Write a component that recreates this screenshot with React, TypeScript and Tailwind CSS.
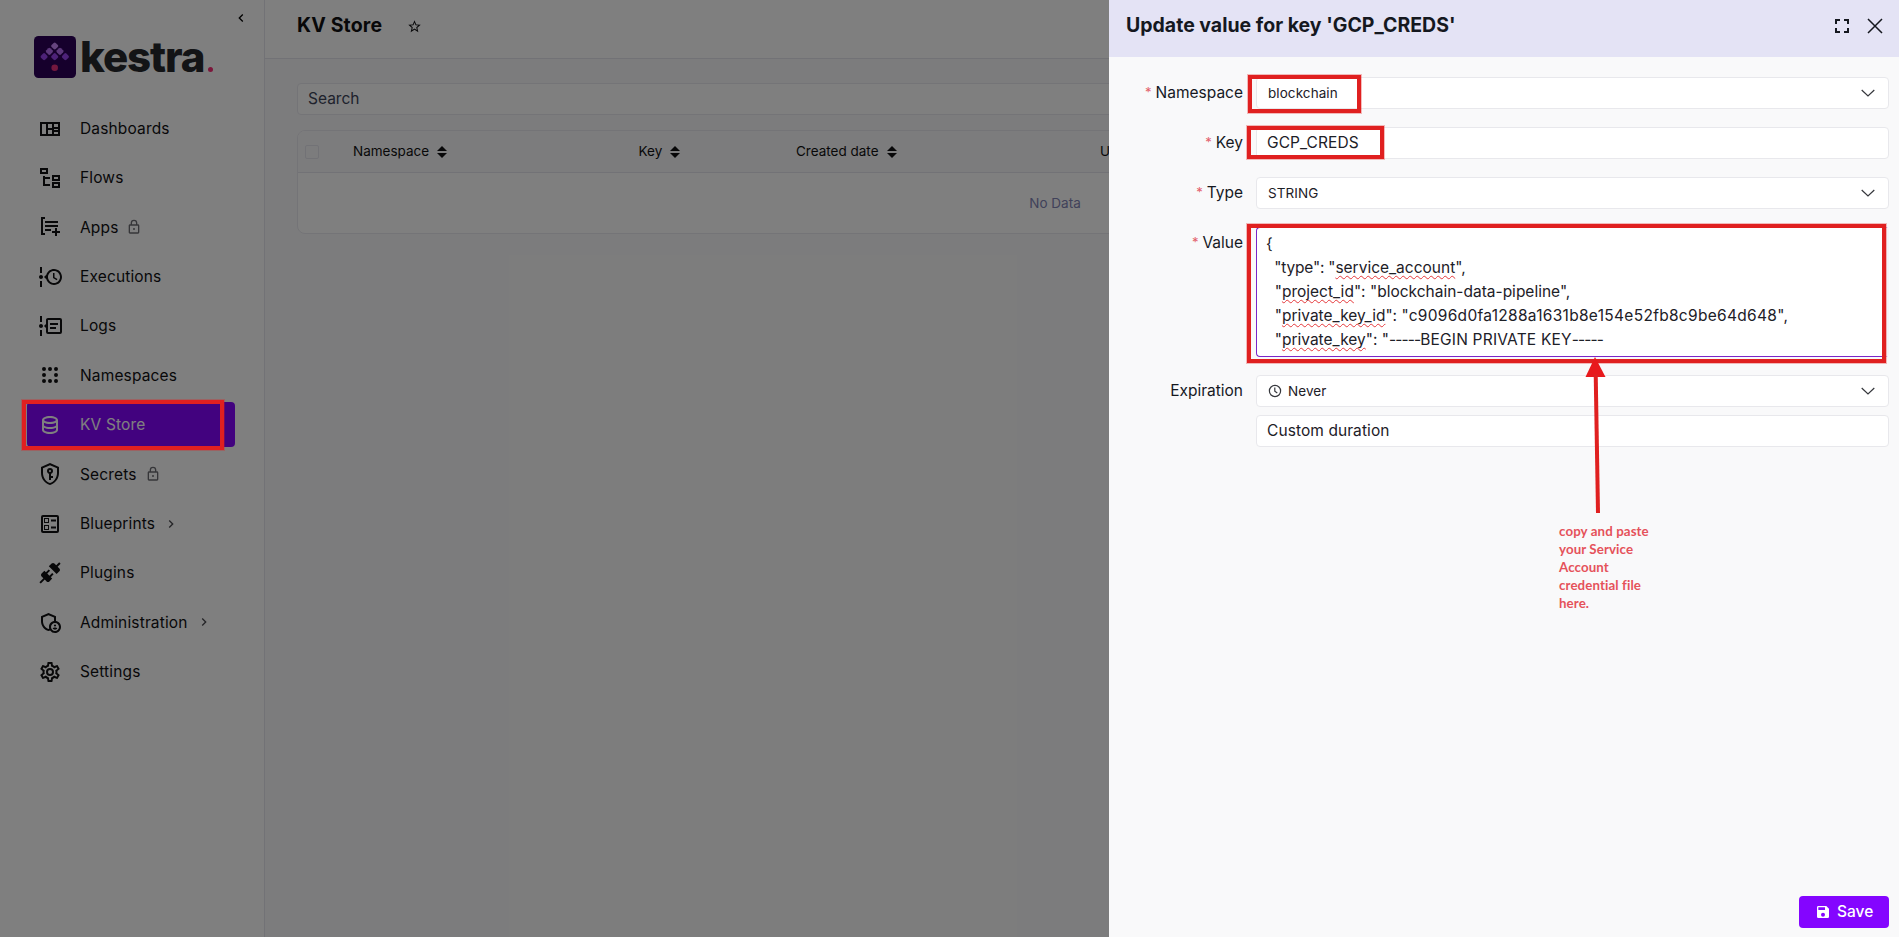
import React from "react";
import { MdOutlineAdminPanelSettings } from "react-icons/md";

const ICONS = {
  dashboard:
    "M2 5H22V19H2V5M4 7V17H8V7H4M10 7V11H14V7H10M10 13V17H14V13H10M16 7V10H20V7H16M16 12V13H20V12H16M16 15V17H20V15H16Z",
  flows:
    "M12,13H7v5h5v2H5V10h2v1h5v2M8,4V6H4V4H8m2-2H2v6h8V2m10,9v2H16V11h4m2-2H14v6h8V9m-2,9v2H16V18h4m2-2H14v6h8V16Z",
  apps: "M5 4V18H7V20H3V2H7V4H5M20 6H7V8H20V6M20 10H7V12H20V10M13 14H7V16H13V14M17 13H19V16H22V18H19V21H17V18H14V16H17V13Z",
  executions:
    "M4 2V8H2V2H4M2 22V16H4V22H2M5 12C5 13.11 4.11 14 3 14C1.9 14 1 13.11 1 12C1 10.9 1.9 10 3 10C4.11 10 5 10.9 5 12M24 12C24 16.42 20.42 20 16 20C12.4 20 9.36 17.62 8.35 14.35L6 12L8.35 9.65C9.36 6.38 12.4 4 16 4C20.42 4 24 7.58 24 12M22 12C22 8.69 19.31 6 16 6C12.69 6 10 8.69 10 12C10 15.31 12.69 18 16 18C19.31 18 22 15.31 22 12M16.5 8H15V13L18.7 15.2L19.5 14L16.5 12.2V8Z",
  logs: "M4 2V8H2V2H4M2 22V16H4V22H2M5 12C5 13.11 4.11 14 3 14C1.9 14 1 13.11 1 12C1 10.9 1.9 10 3 10C4.11 10 5 10.9 5 12M22 4H10C8.9 4 8 4.9 8 6V10L6 12L8 14V18A2 2 0 0 0 10 20H22A2 2 0 0 0 24 18V6A2 2 0 0 0 22 4M22 18H10V6H22V18M20 11H12V9H20V11M18 15H12V13H18V15Z",
  namespaces:
    "M4 6a2 2 0 1 0 4 0a2 2 0 1 0-4 0M10 6a2 2 0 1 0 4 0a2 2 0 1 0-4 0M16 6a2 2 0 1 0 4 0a2 2 0 1 0-4 0M4 12a2 2 0 1 0 4 0a2 2 0 1 0-4 0M16 12a2 2 0 1 0 4 0a2 2 0 1 0-4 0M4 18a2 2 0 1 0 4 0a2 2 0 1 0-4 0M10 18a2 2 0 1 0 4 0a2 2 0 1 0-4 0M16 18a2 2 0 1 0 4 0a2 2 0 1 0-4 0Z",
  database:
    "M12 3C7.58 3 4 4.79 4 7V17C4 19.21 7.59 21 12 21S20 19.21 20 17V7C20 4.79 16.42 3 12 3M18 17C18 17.5 15.87 19 12 19S6 17.5 6 17V14.77C7.61 15.55 9.72 16 12 16S16.39 15.55 18 14.77V17M18 12.45C16.7 13.4 14.42 14 12 14C9.58 14 7.3 13.4 6 12.45V9.64C7.47 10.47 9.61 11 12 11C14.39 11 16.53 10.47 18 9.64V12.45M12 9C8.13 9 6 7.5 6 7S8.13 5 12 5C15.87 5 18 6.5 18 7S15.87 9 12 9Z",
  secrets:
    "M21,11C21,16.55 17.16,21.74 12,23C6.84,21.74 3,16.55 3,11V5L12,1L21,5V11M12,21C15.75,20 19,15.54 19,11.22V6.3L12,3.18L5,6.3V11.22C5,15.54 8.25,20 12,21M12,6A3,3 0 0,1 15,9C15,10.31 14.17,11.42 13,11.83V14H15V16H13V18H11V11.83C9.83,11.42 9,10.31 9,9A3,3 0 0,1 12,6M12,8A1,1 0 0,0 11,9A1,1 0 0,0 12,10A1,1 0 0,0 13,9A1,1 0 0,0 12,8Z",
  blueprints:
    "M13,9.5H18V7.5H13V9.5M13,16.5H18V14.5H13V16.5M19,21H5A2,2 0 0,1 3,19V5A2,2 0 0,1 5,3H19A2,2 0 0,1 21,5V19A2,2 0 0,1 19,21M5,5V19H19V5H5M6,11H11V6H6V11M7,7H10V10H7V7M6,18H11V13H6V18M7,14H10V17H7V14Z",
  plugins:
    "M21.4 7.5C22.2 8.3 22.2 9.6 21.4 10.3L18.6 13.1L10.8 5.3L13.6 2.5C14.4 1.7 15.7 1.7 16.4 2.5L18.2 4.3L21.2 1.3L22.6 2.7L19.6 5.7L21.4 7.5M15.6 13.3L14.2 11.9L11.4 14.7L9.3 12.6L12.1 9.8L10.7 8.4L7.9 11.2L6.4 9.8L3.6 12.6C2.8 13.4 2.8 14.7 3.6 15.4L5.4 17.2L1.4 21.2L2.8 22.6L6.8 18.6L8.6 20.4C9.4 21.2 10.7 21.2 11.4 20.4L14.2 17.6L12.8 16.2L15.6 13.3Z",
  settings:
    "M12,8A4,4 0 0,1 16,12A4,4 0 0,1 12,16A4,4 0 0,1 8,12A4,4 0 0,1 12,8M12,10A2,2 0 0,0 10,12A2,2 0 0,0 12,14A2,2 0 0,0 14,12A2,2 0 0,0 12,10M10,22C9.75,22 9.54,21.82 9.5,21.58L9.13,18.93C8.5,18.68 7.96,18.34 7.44,17.94L4.95,18.95C4.73,19.03 4.46,18.95 4.34,18.73L2.34,15.27C2.21,15.05 2.27,14.78 2.46,14.63L4.57,12.97L4.5,12L4.57,11L2.46,9.37C2.27,9.22 2.21,8.95 2.34,8.73L4.34,5.27C4.46,5.05 4.73,4.96 4.95,5.05L7.44,6.05C7.96,5.66 8.5,5.32 9.13,5.07L9.5,2.42C9.54,2.18 9.75,2 10,2H14C14.25,2 14.46,2.18 14.5,2.42L14.87,5.07C15.5,5.32 16.04,5.66 16.56,6.05L19.05,5.05C19.27,4.96 19.54,5.05 19.66,5.27L21.66,8.73C21.79,8.95 21.73,9.22 21.54,9.37L19.43,11L19.5,12L19.43,13L21.54,14.63C21.73,14.78 21.79,15.05 21.66,15.27L19.66,18.73C19.54,18.95 19.27,19.04 19.05,18.95L16.56,17.95C16.04,18.34 15.5,18.68 14.87,18.93L14.5,21.58C14.46,21.82 14.25,22 14,22H10M11.25,4L10.88,6.61C9.68,6.86 8.62,7.5 7.85,8.39L5.44,7.35L4.69,8.65L6.8,10.2C6.4,11.37 6.4,12.64 6.8,13.8L4.68,15.36L5.43,16.66L7.86,15.62C8.63,16.5 9.68,17.14 10.87,17.38L11.24,20H12.76L13.13,17.39C14.32,17.14 15.37,16.5 16.14,15.62L18.57,16.66L19.32,15.36L17.2,13.81C17.6,12.64 17.6,11.37 17.2,10.2L19.31,8.65L18.56,7.35L16.15,8.39C15.38,7.5 14.32,6.86 13.12,6.62L12.75,4H11.25Z",
  lock: "M12,16.5A1.5,1.5 0 0,1 12,13.5A1.5,1.5 0 0,1 12,16.5M18,20V10H6V20H18M18,8A2,2 0 0,1 20,10V20A2,2 0 0,1 18,22H6C4.89,22 4,21.1 4,20V10C4,8.89 4.89,8 6,8H7V6A5,5 0 0,1 12,1A5,5 0 0,1 17,6V8H18M12,3A3,3 0 0,0 9,6V8H15V6A3,3 0 0,0 12,3Z",
  chevronRight: "M8.59,16.58L13.17,12L8.59,7.41L10,6L16,12L10,18L8.59,16.58Z",
  chevronLeft: "M15.41,16.58L10.83,12L15.41,7.41L14,6L8,12L14,18L15.41,16.58Z",
  star: "M12,15.39L8.24,17.66L9.23,13.38L5.91,10.5L10.29,10.13L12,6.09L13.71,10.13L18.09,10.5L14.77,13.38L15.76,17.66M22,9.24L14.81,8.63L12,2L9.19,8.63L2,9.24L7.45,13.97L5.82,21L12,17.27L18.18,21L16.54,13.97L22,9.24Z",
  fullscreen:
    "M5,5H10V7H7V10H5V5M14,5H19V10H17V7H14V5M17,14H19V19H14V17H17V14M10,17V19H5V14H7V17H10Z",
  save: "M15,9H5V5H15M12,19A3,3 0 0,1 9,16A3,3 0 0,1 12,13A3,3 0 0,1 15,16A3,3 0 0,1 12,19M17,3H5C3.89,3 3,3.9 3,5V19A2,2 0 0,0 5,21H19A2,2 0 0,0 21,19V7L17,3Z",
};

type IconName = keyof typeof ICONS;

function Icon({ name, className = "size-6" }: { name: IconName; className?: string }) {
  return (
    <svg viewBox="0 0 24 24" className={`shrink-0 ${className}`} fill="currentColor" fillRule="evenodd">
      <path d={ICONS[name]} />
    </svg>
  );
}

function ChevronDown() {
  return (
    <svg viewBox="0 0 14 8" className="mr-[13px] h-2 w-3.5 shrink-0" fill="none" stroke="#35373c" strokeWidth="1.2">
      <path d="M0.7 1L7 7L13.3 1" />
    </svg>
  );
}

function Sorter() {
  return (
    <svg viewBox="0 0 10 12" className="ml-2 h-3 w-2.5" fill="currentColor">
      <path d="M0 5L5 0L10 5Z" />
      <path d="M0 7L5 12L10 7Z" />
    </svg>
  );
}

interface NavEntry {
  label: string;
  icon: IconName | "admin";
  locked?: boolean;
  expandable?: boolean;
  active?: boolean;
}

const NAV: NavEntry[] = [
  { label: "Dashboards", icon: "dashboard" },
  { label: "Flows", icon: "flows" },
  { label: "Apps", icon: "apps", locked: true },
  { label: "Executions", icon: "executions" },
  { label: "Logs", icon: "logs" },
  { label: "Namespaces", icon: "namespaces" },
  { label: "KV Store", icon: "database", active: true },
  { label: "Secrets", icon: "secrets", locked: true },
  { label: "Blueprints", icon: "blueprints", expandable: true },
  { label: "Plugins", icon: "plugins" },
  { label: "Administration", icon: "admin", expandable: true },
  { label: "Settings", icon: "settings" },
];

function Logo() {
  return (
    <div className="ml-[34px] flex h-[42px] items-center">
      <svg viewBox="0 0 42 42" className="size-[42px]">
        <rect width="42" height="42" rx="4.5" fill="#2c0059" />
        <g>
          <rect x="-2.9" y="-2.9" width="5.8" height="5.8" rx="1.4" fill="#cd88ff" transform="translate(20.7 10) rotate(45)" />
          <rect x="-2.9" y="-2.9" width="5.8" height="5.8" rx="1.4" fill="#b970f5" transform="translate(15.4 15.3) rotate(45)" />
          <rect x="-2.9" y="-2.9" width="5.8" height="5.8" rx="1.4" fill="#b970f5" transform="translate(26 15.3) rotate(45)" />
          <rect x="-2.9" y="-2.9" width="5.8" height="5.8" rx="1.4" fill="#9a45f0" transform="translate(10.1 20.7) rotate(45)" />
          <rect x="-2.9" y="-2.9" width="5.8" height="5.8" rx="1.4" fill="#9a45f0" transform="translate(20.7 20.7) rotate(45)" />
          <rect x="-2.9" y="-2.9" width="5.8" height="5.8" rx="1.4" fill="#9a45f0" transform="translate(31.4 20.7) rotate(45)" />
        </g>
        <circle cx="20.7" cy="31.8" r="3.3" fill="#e8307c" />
      </svg>
      <span className="ml-[4px] text-[42px] leading-[42px] font-extrabold tracking-[-1.05px] text-[#26282d]">kestra</span>
      <span className="mt-[24px] ml-[3px] size-[5px] rounded-full bg-[#f62e76]" />
    </div>
  );
}

function Sidebar() {
  return (
    <aside className="flex w-[265px] shrink-0 flex-col border-r border-[#e5e4ed] bg-white">
      <div className="flex h-9 justify-end pt-[10px] pr-[15px]">
        <Icon name="chevronLeft" className="size-4" />
      </div>
      <Logo />
      <nav className="mt-[28px] flex flex-col gap-[4.4px] pl-[27px]">
        {NAV.map((item) => (
          <div
            key={item.label}
            className={`flex h-[45px] w-[208px] items-center rounded-[4px] pl-[11px] ${
              item.active ? "bg-[#8405ff] text-white" : "text-[#111113]"
            }`}
          >
            {item.icon === "admin" ? (
              <MdOutlineAdminPanelSettings className="size-6 shrink-0" />
            ) : (
              <Icon name={item.icon} />
            )}
            <span className="ml-[18px] text-[15.5px] tracking-[0.15px] whitespace-nowrap">{item.label}</span>
            {item.locked && <Icon name="lock" className="ml-2 size-4 text-[#6d6d72]" />}
            {item.expandable && <Icon name="chevronRight" className="ml-2 size-4 text-[#4b4b50]" />}
          </div>
        ))}
      </nav>
    </aside>
  );
}

function MainPage() {
  return (
    <main className="flex w-[1634px] shrink-0 flex-col bg-[#f9f9fa]">
      <header className="flex h-[59px] items-center border-b border-[#e5e4ed] bg-white pb-[6px] pl-8 text-[#111113]">
        <h1 className="text-[19.5px] font-bold tracking-[0.15px]">KV Store</h1>
        <Icon name="star" className="ml-[25px] size-[15px]" />
      </header>
      <div className="mt-6 ml-8 flex h-8 w-[1518px] items-center rounded-[4px] border border-[#e9e8ef] bg-white pl-[10px] text-[15.5px] text-[#404559]">
        Search
      </div>
      <section className="mt-[15px] ml-8 w-[1516px] overflow-hidden rounded-[8px] border border-[#e9e8ef] bg-white">
        <div className="flex h-[42px] items-center border-b border-[#e5e4ed] bg-[#f9f9fa] pl-[7px] text-[13.5px] text-[#111113]">
          <span className="size-[14px] rounded-[2px] border border-[#e5e4ed]" />
          <span className="ml-[34px] flex w-[285.5px] items-center">Namespace<Sorter /></span>
          <span className="flex w-[157.5px] items-center">Key<Sorter /></span>
          <span className="flex w-[304px] items-center">Created date<Sorter /></span>
          <span>Updated date</span>
        </div>
        <div className="flex h-[60px] items-center justify-center text-[13.5px] text-[#8284b4]">No Data</div>
      </section>
    </main>
  );
}

function Field({
  label,
  required = true,
  children,
}: {
  label: string;
  required?: boolean;
  children: React.ReactNode;
}) {
  return (
    <div className="flex">
      <div className="flex h-8 w-[134px] shrink-0 items-center justify-end text-[15.5px] text-[#15181f]">
        {required && <span className="mr-[4px] text-[13px] text-[#e3606a]">*</span>}
        {label}
      </div>
      <div className="ml-[13px] flex w-[633px] flex-col gap-2">{children}</div>
    </div>
  );
}

function Control({
  children,
  select,
  className = "pl-[10px] text-[15.5px]",
}: {
  children: React.ReactNode;
  select?: boolean;
  className?: string;
}) {
  return (
    <div className={`flex h-8 items-center justify-between rounded-[4px] border border-[#e8e8ec] bg-white text-[#1d2027] ${className}`}>
      <span className="flex items-center tracking-[0.08px]">{children}</span>
      {select && <ChevronDown />}
    </div>
  );
}

function Misspelt({ children }: { children: string }) {
  return (
    <span className="underline decoration-[#e5383b] decoration-wavy decoration-[1.3px] underline-offset-[2px] [text-decoration-skip-ink:none]">
      {children}
    </span>
  );
}

function Drawer() {
  return (
    <section className="absolute inset-y-0 right-0 flex w-[790px] flex-col bg-[#f9f9fa]">
      <header className="flex h-[57px] items-center bg-[#e4e3f5] pb-[6px] pl-[17px] text-[#15181f]">
        <h2 className="text-[19.5px] font-bold whitespace-nowrap">Update value for key 'GCP_CREDS'</h2>
        <Icon name="fullscreen" className="ml-auto size-6" />
        <svg viewBox="0 0 16 16" className="mr-4 ml-[13px] size-4" fill="none" stroke="#15181f" strokeWidth="1.5">
          <path d="M1 1L15 15M15 1L1 15" />
        </svg>
      </header>
      <div className="mt-5 flex flex-col gap-[18px]">
        <Field label="Namespace">
          <Control select className="pl-[11px] text-[13.5px]">blockchain</Control>
        </Field>
        <Field label="Key">
          <Control>GCP_CREDS</Control>
        </Field>
        <Field label="Type">
          <Control select className="pl-[11px] text-[13.5px]">STRING</Control>
        </Field>
        <Field label="Value">
          <div className="h-[130px] rounded-[4px] border border-r-4 border-[#7a26c9] border-r-[#f4f4f8] bg-white pt-1 pl-[9px] text-[15.5px] leading-6 whitespace-pre text-[#1d2027]">
            <div>{"{"}</div>
            <div>
              <span className="tracking-[-0.2px]">{'  "type": "'}</span>
              <Misspelt>service_account</Misspelt>
              {'",'}
            </div>
            <div>{'  "'}<Misspelt>project_id</Misspelt>{'": "blockchain-data-pipeline",'}</div>
            <div>
              {'  "'}
              <Misspelt>private_key_id</Misspelt>
              {'": "'}
              <span className="tracking-[0.3px]">{'c9096d0fa1288a1631b8e154e52fb8c9be64d648",'}</span>
            </div>
            <div>
              {'  "'}
              <Misspelt>private_key</Misspelt>
              {'": "'}
              <span className="tracking-[-0.9px]">-----</span>
              <span className="tracking-[0.2px]">BEGIN PRIVATE KEY</span>
              <span className="tracking-[-0.9px]">-----</span>
            </div>
          </div>
        </Field>
        <Field label="Expiration" required={false}>
          <Control select className="pl-[11px] text-[13.5px]">
            <svg viewBox="0 0 14 14" className="mr-[6px] size-[14px]" fill="none" stroke="#35373c" strokeWidth="1.2">
              <circle cx="7" cy="7" r="5.6" />
              <path d="M6.8 3.6V7.3L9.3 9" />
            </svg>
            Never
          </Control>
          <Control>Custom duration</Control>
        </Field>
      </div>
      <button className="mt-auto mr-[10px] mb-[9px] flex h-8 w-[90px] items-center self-end rounded-[4px] bg-[#8405ff] pl-4 text-[15.5px] font-medium text-white">
        <Icon name="save" className="mr-[6px] size-4" />
        Save
      </button>
    </section>
  );
}

/* Red call-outs drawn over the page: boxes, an arrow and a note. */
function Annotations() {
  const box = "absolute border-4 border-[#e02020] outline-1 outline-[#e02020]/30";
  return (
    <>
      <div className={`${box} top-[400px] left-[22px] h-[50px] w-[202px]`} />
      <div className={`${box} top-[75px] left-[1248px] h-[38px] w-[113px]`} />
      <div className={`${box} top-[125.5px] left-[1247px] h-[33px] w-[137px]`} />
      <div className={`${box} top-[224px] left-[1247px] h-[139px] w-[639px]`} />
      <svg viewBox="0 0 24 160" className="absolute top-[356px] left-[1583px] h-[160px] w-6">
        <path d="M12 1L2.5 21H22.5Z" fill="#e8191c" />
        <path d="M12.7 18L15 157" stroke="#e02020" strokeWidth="4" />
      </svg>
      <p className="absolute top-[522px] left-[1559px] font-[Lato,sans-serif] text-[13.3px] leading-[18px] font-bold tracking-[0.1px] whitespace-pre text-[#e5525a]">
        {"copy and paste\nyour Service\nAccount\ncredential file\nhere."}
      </p>
    </>
  );
}

export default function App() {
  return (
    <div className="relative flex h-[937px] w-[1899px] overflow-hidden font-[Inter,'Liberation_Sans',sans-serif]">
      <Sidebar />
      <MainPage />
      <div className="absolute inset-0 bg-black/50" />
      <Drawer />
      <Annotations />
    </div>
  );
}
